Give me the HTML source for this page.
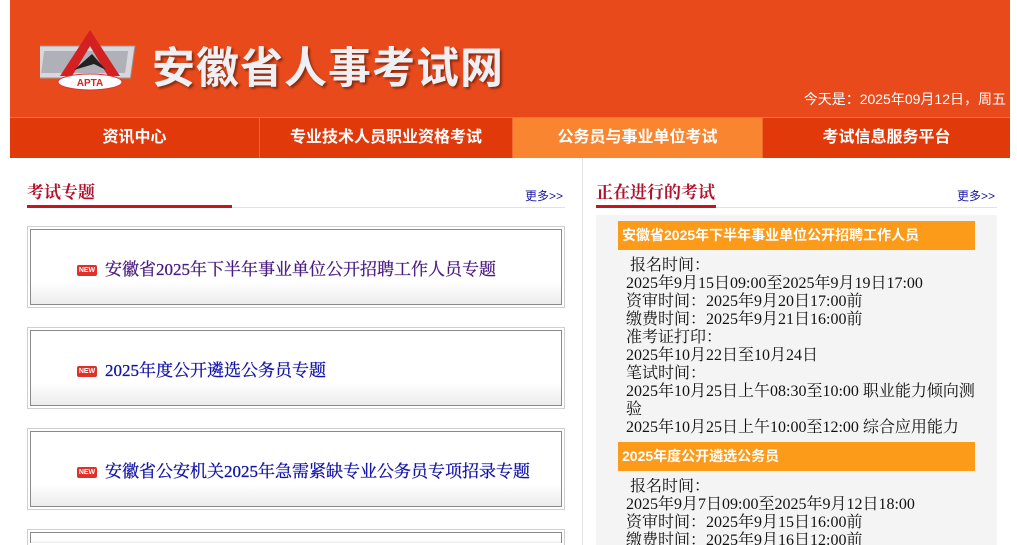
<!DOCTYPE html>
<html><head><meta charset="utf-8"><style>
*{margin:0;padding:0;box-sizing:border-box}
html,body{width:1017px;height:545px;overflow:hidden}
body{background:#fff;font-family:"Liberation Sans","Noto Sans CJK SC",sans-serif;position:relative}
.hdr{position:absolute;left:10px;top:0;width:1000px;height:117px;background:#e84a1c}
.title{position:absolute;left:142px;top:34px;font-size:43px;font-weight:bold;color:#eef0f4;letter-spacing:1px;text-shadow:2px 2px 2px #8a2a10;font-family:"Noto Sans CJK SC",sans-serif}
.date{position:absolute;right:4px;top:89px;font-size:14px;color:#fff}
.nav{position:absolute;left:10px;top:117px;width:1000px;height:41px;background:#e2390a;display:flex;border-top:1px solid #f07040}
.nav div{text-align:center;line-height:40px;color:#fff;font-weight:bold;font-size:16px;border-right:1px solid #f06a30}
.nav .on{background:#fa8530}
.vline{position:absolute;left:582px;top:158px;width:1px;height:400px;background:#e4e4e4}
.sec{position:absolute;font-size:17px;color:#b0122c;font-family:"Noto Serif CJK SC",serif;font-weight:bold}
.more{position:absolute;font-size:12px;color:#1a1aa0}
.rule{position:absolute;height:1px;background:#e2e2e2}
.red{position:absolute;height:3px;background:#c8141c}
.box{position:absolute;left:27px;width:538px;height:82px;border:1px solid #cfcfcf;padding:2px}
.box .in{width:100%;height:100%;border:1px solid #8a8a8a;background:linear-gradient(#fff 70%,#ececec);position:relative}
.box .t{position:absolute;top:25px;font-size:17px;font-family:"Liberation Serif","Noto Serif CJK SC",serif;color:#1212a8;-webkit-text-stroke:0.3px currentColor}
.new{display:inline-block;width:20px;height:11px;background:#e0302a;border-radius:2px;color:#fff;font-size:7px;line-height:11px;text-align:center;font-family:"Liberation Sans",sans-serif;font-weight:bold;vertical-align:3px;margin-right:8px;position:relative;-webkit-text-stroke:0}
.panel{position:absolute;left:596px;top:215px;width:401px;height:330px;background:#f4f4f4}
.bar{position:absolute;left:618px;width:357px;height:29px;background:#fc9a1a;color:#fff;font-weight:bold;font-size:14px;line-height:29px;padding-left:4px}
.txt{position:absolute;left:626px;font-size:16px;line-height:18px;color:#111;font-family:"Liberation Serif","Noto Serif CJK SC",serif;width:362px}
</style></head><body>
<div class="hdr">
<svg style="position:absolute;left:30px;top:24px" width="100" height="68" viewBox="0 0 100 68">
<rect x="2" y="22" width="96" height="32" fill="#d8d8dc" stroke="#999" transform="skewX(-8)"/>
<rect x="8" y="27" width="84" height="22" fill="#b0b0b8" transform="skewX(-8)"/>
<polygon points="20,52 50,6 80,52 68,52 50,22 32,52" fill="#d42020"/>
<polygon points="34,46 52,30 66,46 54,40" fill="#222"/>
<ellipse cx="50" cy="58" rx="32" ry="8" fill="#fff" stroke="#d33"/>
<text x="50" y="62" font-size="10" font-weight="bold" fill="#d22" text-anchor="middle" font-family="Liberation Sans">APTA</text>
</svg>
<div class="title">安徽省人事考试网</div>
<div class="date">今天是：2025年09月12日，周五</div>
</div>
<div class="nav"><div style="width:250px">资讯中心</div><div style="width:253px">专业技术人员职业资格考试</div><div class="on" style="width:250px">公务员与事业单位考试</div><div style="width:247px;border:none">考试信息服务平台</div></div>
<div class="vline"></div>
<div class="sec" style="left:27px;top:178px">考试专题</div>
<div class="more" style="left:525px;top:187px">更多&gt;&gt;</div>
<div class="rule" style="left:27px;top:207px;width:538px"></div>
<div class="red" style="left:27px;top:205px;width:205px"></div>
<div class="box" style="top:226px"><div class="in"><div class="t" style="left:46px;color:#4a1a80"><span class="new">NEW</span>安徽省2025年下半年事业单位公开招聘工作人员专题</div></div></div>
<div class="box" style="top:327px"><div class="in"><div class="t" style="left:46px"><span class="new">NEW</span>2025年度公开遴选公务员专题</div></div></div>
<div class="box" style="top:428px"><div class="in"><div class="t" style="left:46px"><span class="new">NEW</span>安徽省公安机关2025年急需紧缺专业公务员专项招录专题</div></div></div>
<div class="box" style="top:529px;height:16px;border-bottom:none"><div class="in" style="border-bottom:none"></div></div>
<div class="sec" style="left:596px;top:178px">正在进行的考试</div>
<div class="more" style="left:957px;top:187px">更多&gt;&gt;</div>
<div class="rule" style="left:596px;top:207px;width:401px"></div>
<div class="red" style="left:596px;top:205px;width:120px"></div>
<div class="panel"></div>
<div class="bar" style="top:221px">安徽省2025年下半年事业单位公开招聘工作人员</div>
<div class="txt" style="top:257px">&nbsp;报名时间：<br>2025年9月15日09:00至2025年9月19日17:00<br>资审时间：2025年9月20日17:00前<br>缴费时间：2025年9月21日16:00前<br>准考证打印：<br>2025年10月22日至10月24日<br>笔试时间：<br>2025年10月25日上午08:30至10:00 职业能力倾向测验<br>2025年10月25日上午10:00至12:00 综合应用能力</div>
<div class="bar" style="top:442px">2025年度公开遴选公务员</div>
<div class="txt" style="top:478px;height:67px;overflow:hidden">&nbsp;报名时间：<br>2025年9月7日09:00至2025年9月12日18:00<br>资审时间：2025年9月15日16:00前<br>缴费时间：2025年9月16日12:00前</div>
</body></html>
